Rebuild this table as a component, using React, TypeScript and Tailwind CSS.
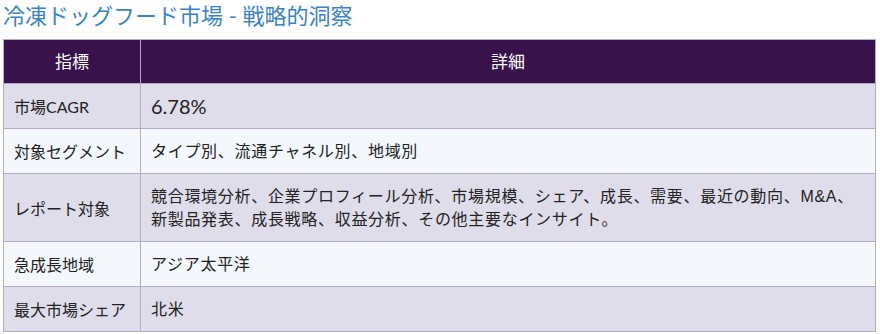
const rows: { label: string; value: React.ReactNode; lato?: boolean }[] = [
  { label: "市場CAGR", value: "6.78%", lato: true },
  { label: "対象セグメント", value: "タイプ別、流通チャネル別、地域別" },
  {
    label: "レポート対象",
    value: (
      <>
        競合環境分析、企業プロフィール分析、市場規模、シェア、成長、需要、最近の動向、M&amp;A、
        <br />
        新製品発表、成長戦略、収益分析、その他主要なインサイト。
      </>
    ),
  },
  { label: "急成長地域", value: "アジア太平洋" },
  { label: "最大市場シェア", value: "北米" },
];

export default function App() {
  return (
    <div className="bg-white w-[880px] h-[334px] overflow-hidden font-['Liberation_Sans','Noto_Sans_CJK_JP',sans-serif]">
      <h2 className="pl-[3px] pt-[2px] h-[39px] text-[22px] leading-[28px] text-[#3a84c6] font-['Lato','Noto_Sans_CJK_JP',sans-serif]">
        冷凍ドッグフード市場 - 戦略的洞察
      </h2>
      <table className="ml-[3px] w-[873px] border-collapse text-[16px] text-[#222]">
        <thead>
          <tr className="bg-[#38124b] text-white">
            <th className="w-[137px] h-[44px] border border-[#b4abc6] text-[17px] font-normal text-center font-['Lato','Noto_Sans_CJK_JP',sans-serif]">
              指標
            </th>
            <th className="h-[44px] border border-[#b4abc6] text-[17px] font-normal text-center font-['Lato','Noto_Sans_CJK_JP',sans-serif]">
              詳細
            </th>
          </tr>
        </thead>
        <tbody>
          {rows.map((r, i) => (
            <tr key={r.label} className={i % 2 === 0 ? "bg-[#dfdde9]" : "bg-[#f4f8fc]"}>
              <td className="border border-[#b4abc6] pl-[10px] pr-1 pt-[11px] pb-[10px] leading-[23px] whitespace-nowrap font-['Lato','Noto_Sans_CJK_JP',sans-serif]">
                {r.label}
              </td>
              <td
                className={
                  r.lato
                    ? "border border-[#b4abc6] pl-[10px] pt-[11px] pb-[10px] leading-[23px] text-[20px] font-['Lato',sans-serif]"
                    : "border border-[#b4abc6] pl-[10px] pt-[11px] pb-[10px] leading-[23px] tracking-[0.7px]"
                }
              >
                {r.value}
              </td>
            </tr>
          ))}
        </tbody>
      </table>
    </div>
  );
}
